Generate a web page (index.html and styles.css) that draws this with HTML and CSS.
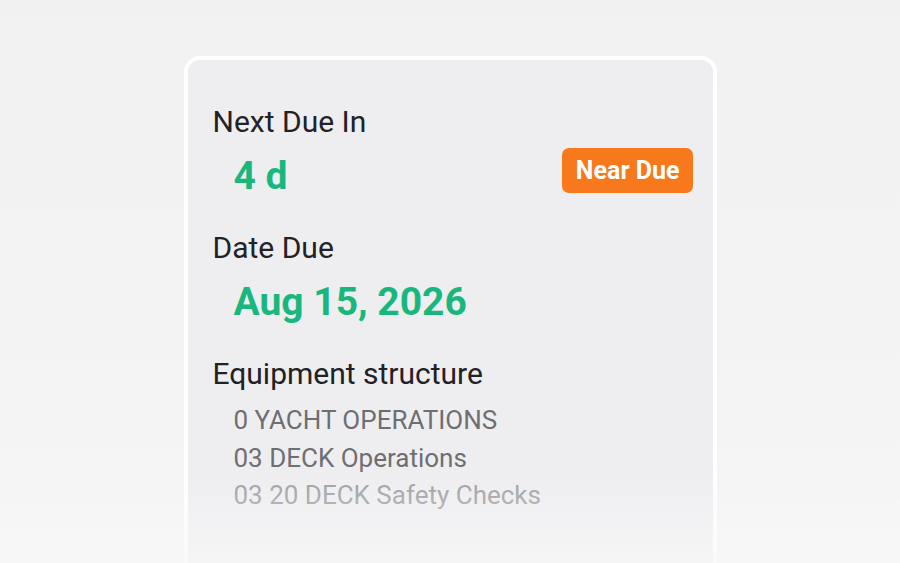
FILE: index.html
```html
<!DOCTYPE html>
<html lang="en">
<head>
    <meta charset="UTF-8">
    <title>Task Due Details</title>
    <link rel="stylesheet" href="styles.css">
</head>
<body>

<div class="card">
    <div class="field">
        <div class="label">Next Due In</div>
        <div class="value-row">
            <span class="value">4 d</span>
            <span class="badge">Near Due</span>
        </div>
    </div>

    <div class="field">
        <div class="label">Date Due</div>
        <div class="value-row">
            <span class="value">Aug 15, 2026</span>
        </div>
    </div>

    <div class="field">
        <div class="label">Equipment structure</div>
        <ul class="tree">
            <li>0 YACHT OPERATIONS</li>
            <li>03 DECK Operations</li>
            <li>03 20 DECK Safety Checks</li>
        </ul>
    </div>
</div>

<div class="fade"></div>

</body>
</html>
```

FILE: styles.css
```css
html, body {
    height: 100%;
}
body {
    font-family: Roboto, "Liberation Sans", Arial, sans-serif;
    background: linear-gradient(#f1f1f1, #f3f3f3 60%, #f6f6f6);
    margin: 0;
    padding: 0;
    overflow: hidden;
}
.card {
    box-sizing: border-box;
    width: 533px;
    margin: 56px auto 0;
    padding: 44px 20px 80px 25px;
    background-color: #eeeef1;
    border: 4px solid #ffffff;
    border-radius: 16px;
    min-height: 600px;
}
.field {
    margin-bottom: 31px;
}
.label {
    font-size: 30px;
    color: #222226;
    line-height: 36px;
}
.value-row {
    display: flex;
    align-items: center;
    justify-content: space-between;
    padding-left: 21px;
    margin-top: 13px;
    height: 46px;
}
.value {
    font-size: 39px;
    line-height: 46px;
    font-weight: 700;
    color: #19b77e;
}
.badge {
    background-color: #f7791c;
    color: #fff;
    font-weight: 700;
    font-size: 25px;
    line-height: 29px;
    padding: 8px 13px 8px 14px;
    border-radius: 7px;
    margin-top: -11px;
}
.tree {
    list-style: none;
    margin: 10px 0 0;
    padding: 0 0 0 21px;
}
.tree li {
    font-size: 26px;
    line-height: 37.5px;
    color: #6e6e72;
}
.tree li:last-child {
    color: #98989c;
}
.fade {
    position: fixed;
    left: 0;
    right: 0;
    bottom: 0;
    height: 100px;
    background: linear-gradient(rgba(248, 248, 248, 0), rgba(248, 248, 248, 0.7));
}
```
